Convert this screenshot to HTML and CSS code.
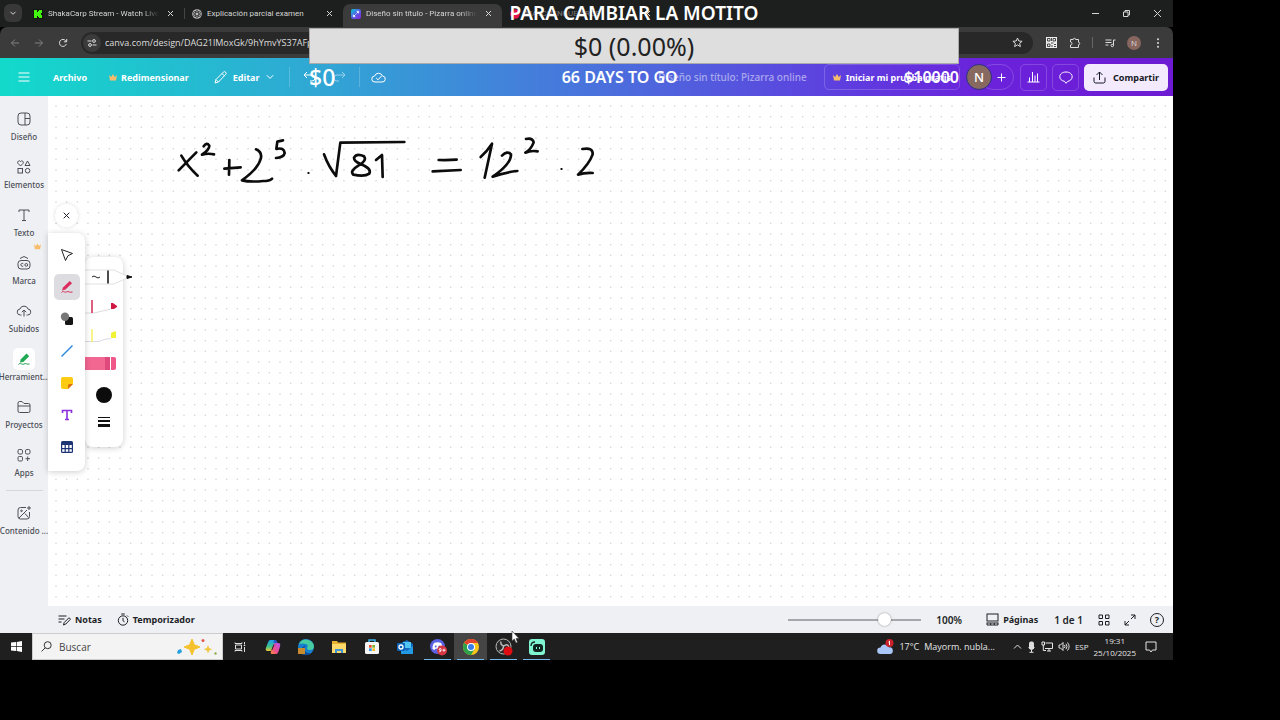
FILE: index.html
```html
<!DOCTYPE html>
<html lang="es">
<head>
<meta charset="utf-8">
<meta name="viewport" content="width=device-width, initial-scale=1.0">
<title>Diseño sin título - Pizarra online</title>
<link rel="stylesheet" href="styles.css">
</head>
<body>
<div class="desktop">

  <!-- browser tabs -->
  <div class="tabs">
    <button class="tab-search" aria-label="Buscar pestañas"><svg width="8" height="8" viewBox="0 0 8 8"><path d="M1.5 2.8 4 5.3 6.5 2.8"/></svg></button>
    <div class="tab">
      <svg class="fav" viewBox="0 0 10 10"><rect width="10" height="10" fill="#101810" stroke="none"/><path d="M1 1h3v2h1V2h1V1h3v3H8v2h1v3H6V8H5V7H4v2H1z" fill="#43f50e" stroke="none"/></svg>
      <span class="tab-title fade">ShakaCarp Stream - Watch Live</span>
      <button class="tab-close" aria-label="Cerrar"><svg width="7" height="7" viewBox="0 0 7 7"><path d="M1 1l5 5M6 1 1 6"/></svg></button>
    </div>
    <div class="tab line">
      <svg class="fav" viewBox="0 0 10 10"><circle cx="5" cy="5" r="4.8" fill="#bbb" stroke="none"/><g stroke="#333" stroke-width=".7"><ellipse cx="5" cy="5" rx="1.7" ry="3.9"/><ellipse cx="5" cy="5" rx="1.7" ry="3.9" transform="rotate(60 5 5)"/><ellipse cx="5" cy="5" rx="1.7" ry="3.9" transform="rotate(120 5 5)"/></g></svg>
      <span class="tab-title">Explicación parcial examen</span>
      <button class="tab-close" aria-label="Cerrar"><svg width="7" height="7" viewBox="0 0 7 7"><path d="M1 1l5 5M6 1 1 6"/></svg></button>
    </div>
    <div class="tab active">
      <svg class="fav" viewBox="0 0 10 10"><defs><linearGradient id="cv" x1="0" y1="0" x2="1" y2="1"><stop offset="0" stop-color="#08c8d0"/><stop offset=".5" stop-color="#5460e8"/><stop offset="1" stop-color="#8b22d8"/></linearGradient></defs><rect width="10" height="10" rx="2" fill="url(#cv)" stroke="none"/><path d="M2.5 7.5l2-2M5.5 4.5l2-2M5.7 2.4h1.9v1.9M2.4 5.7v1.9h1.9" stroke="#fff" stroke-width=".9"/></svg>
      <span class="tab-title fade">Diseño sin título - Pizarra online</span>
      <button class="tab-close" aria-label="Cerrar"><svg width="7" height="7" viewBox="0 0 7 7"><path d="M1 1l5 5M6 1 1 6"/></svg></button>
    </div>
    <div class="tab">
      <svg class="fav" viewBox="0 0 10 10"><circle cx="5" cy="5" r="4.8" fill="#e3124b" stroke="none"/></svg>
      <span class="tab-title dim">MATCHENGUE ARGS</span>
      <button class="tab-close" aria-label="Cerrar"><svg width="7" height="7" viewBox="0 0 7 7"><path d="M1 1l5 5M6 1 1 6"/></svg></button>
    </div>
    <div class="win-controls">
      <button aria-label="Minimizar"><svg width="9" height="9" viewBox="0 0 9 9"><path d="M1 4.5h7"/></svg></button>
      <button aria-label="Restaurar"><svg width="9" height="9" viewBox="0 0 9 9"><path d="M1.5 3h4.5v4.5H1.5zM3 3V1.5h4.5V6H6"/></svg></button>
      <button aria-label="Cerrar ventana"><svg width="9" height="9" viewBox="0 0 9 9"><path d="M1 1l7 7M8 1 1 8"/></svg></button>
    </div>
  </div>

  <!-- address bar -->
  <div class="toolbar">
    <button class="nav off" aria-label="Atrás"><svg width="10" height="10" viewBox="0 0 10 10"><path d="M9 5H1.5M5 1.5 1.5 5 5 8.5"/></svg></button>
    <button class="nav off" aria-label="Adelante"><svg width="10" height="10" viewBox="0 0 10 10"><path d="M1 5h7.5M5 1.5 8.5 5 5 8.5"/></svg></button>
    <button class="nav" aria-label="Recargar"><svg width="10" height="10" viewBox="0 0 10 10"><path d="M8.3 6A3.5 3.5 0 1 1 7.6 2.6L8.6 3.7M8.7 1v2.8H5.9"/></svg></button>
    <div class="omnibox">
      <span class="site"><svg width="10" height="10" viewBox="0 0 10 10"><path d="M.5 3h4M5.5 7h4"/><circle cx="7" cy="3" r="1.4"/><circle cx="3" cy="7" r="1.4"/></svg></span>
      <input class="url" aria-label="Dirección" value="canva.com/design/DAG21lMoxGk/9hYmvYS37AFp">
      <button class="star" aria-label="Favorito"><svg width="11" height="11" viewBox="0 0 11 11"><path d="M5.5 1l1.3 3 3.3.3-2.5 2.1.8 3.2-2.9-1.7-2.9 1.7.8-3.2L.9 4.3l3.300-.3z"/></svg></button>
    </div>
    <div class="ext">
      <button aria-label="Código QR"><svg width="11" height="11" viewBox="0 0 11 11"><rect width="11" height="11" fill="#eee" stroke="none"/><g stroke="#222" stroke-width=".8"><path d="M1.500 1.500h2.500v2.500H1.500zM7 1.500h2.500v2.500H7zM1.500 7h2.500v2.500H1.500z"/><path d="M5.500 1v3M5 6h2.500M8 7.500h2M6 8v2M8 9.500h2"/></g></svg></button>
      <button aria-label="Extensiones"><svg width="12" height="12" viewBox="0 0 12 12"><path d="M1.500 2.500h2.700a1.200 1.200 0 0 1 2.400 0h2.900v2.800a1.200 1.200 0 0 1 0 2.400v2.800h-8V8a1.500 1.500 0 0 0 0-3z"/></svg></button>
      <i class="bar"></i>
      <button aria-label="Lista"><svg width="11" height="10" viewBox="0 0 11 10"><path d="M.5 2h6M.5 4.500h6M.5 7h3M8.500 7.500V2h2"/><circle cx="7.300" cy="7.500" r="1.200"/></svg></button>
      <button class="profile">N</button>
      <button aria-label="Menú"><svg width="4" height="10" viewBox="0 0 4 10"><g fill="#ddd" stroke="none"><circle cx="2" cy="1.200" r="1"/><circle cx="2" cy="5" r="1"/><circle cx="2" cy="8.800" r="1"/></g></svg></button>
    </div>
  </div>

  <!-- canva header -->
  <header class="header">
    <button class="burger" aria-label="Menú principal"><svg width="12" height="10" viewBox="0 0 12 10"><path d="M.5 1h11M.5 5h11M.5 9h11"/></svg></button>
    <button class="menu file">Archivo</button>
    <button class="menu resize"><svg width="8" height="7" viewBox="0 0 8 7"><path class="crown" d="M0 1l2.200 2L4 0l1.800 3L8 1 7 6.500H1z"/></svg>Redimensionar</button>
    <button class="menu edit"><svg width="13" height="13" viewBox="0 0 13 13"><path d="M1 12l1-3.500L9.300 1.200a1.400 1.400 0 0 1 2.300 2.300L4.500 11zM8 2.500 10.300 4.800M2 8.500 4.500 11"/></svg>Editar<svg class="chev" width="8" height="6" viewBox="0 0 8 6"><path d="M.8 1.200 4 4.400 7.200 1.200"/></svg></button>
    <div class="history">
      <button aria-label="Deshacer"><svg width="13" height="12" viewBox="0 0 13 12"><path d="M4 1 1 4l3 3M1 4h8a3 3 0 0 1 0 6H7"/></svg></button>
      <button class="redo" aria-label="Rehacer"><svg width="13" height="12" viewBox="0 0 13 12"><path d="M9 1l3 3-3 3M12 4H4a3 3 0 0 0 0 6h2"/></svg></button>
    </div>
    <button class="cloud" aria-label="Guardado"><svg width="15" height="12" viewBox="0 0 15 12"><path d="M4 11a3 3 0 0 1-.4-6A4.200 4.200 0 0 1 11.500 5 3 3 0 0 1 11 11zM5.200 7l1.800 1.800L10.500 5"/></svg></button>
    <span class="doc-name">Diseño sin título: Pizarra online</span>
    <button class="pro"><svg width="8" height="7" viewBox="0 0 8 7"><path class="crown" d="M0 1l2.200 2L4 0l1.800 3L8 1 7 6.500H1z"/></svg>Iniciar mi prueba gratis</button>
    <div class="people"><span class="avatar">N</span><button class="plus" aria-label="Agregar"><svg width="9" height="9" viewBox="0 0 9 9"><path d="M4.500 0.500v8M.5 4.500h8"/></svg></button></div>
    <button class="square" aria-label="Estadísticas"><svg width="13" height="12" viewBox="0 0 13 12"><path d="M.5 11h12M2.500 11V6.500M5.500 11V1M8 11V4.500M10.500 11V2.500"/></svg></button>
    <button class="square" aria-label="Comentarios"><svg width="14" height="13" viewBox="0 0 14 13"><path d="M5.500 10.300C2.500 9.800.8 8 .8 5.700.8 3 3.400 1 7 1s6.200 2 6.200 4.700S10.800 10 8.800 10.300L7 12.300z"/></svg></button>
    <button class="share"><svg width="13" height="13" viewBox="0 0 13 13"><path d="M1 6.500v3.800A1.700 1.700 0 0 0 2.700 12h7.600a1.700 1.700 0 0 0 1.700-1.700V6.500M6.500 9V1M3.500 4l3-3 3 3"/></svg>Compartir</button>
  </header>

  <div class="editor">
    <nav class="side">
      <a href="#"><svg viewBox="0 0 16 16"><rect x="2" y="2" width="12" height="12" rx="3"/><path d="M9 2v12M9 7.500h5"/></svg>Diseño</a>
      <a href="#"><svg viewBox="0 0 16 16"><path d="M4.500 7 2 4.400a1.500 1.500 0 0 1 2.500-1.900A1.500 1.500 0 0 1 7 4.400zM11.500 2 14 6.500H9z"/><rect x="2" y="9.500" width="4.500" height="4.500"/><circle cx="11.600" cy="11.700" r="2.300"/></svg>Elementos</a>
      <a href="#"><svg viewBox="0 0 16 16"><path d="M3 5V3h10v2M8 3v10.500M6 13.500h4"/></svg>Texto</a>
      <a href="#"><svg viewBox="0 0 16 16"><rect x="2" y="5.500" width="12" height="8.500" rx="3"/><path d="M4 3.500l4-2 4 2M7.300 8.700a1.500 1.500 0 1 0 0 2.300"/><circle cx="10.300" cy="9.900" r="1.400"/></svg>Marca<svg class="badge" viewBox="0 0 8 7"><path class="crown" d="M0 1l2.200 2L4 0l1.800 3L8 1 7 6.500H1z"/></svg></a>
      <a href="#"><svg viewBox="0 0 16 16"><path d="M5.500 12H4.500a3 3 0 0 1-.5-6 4.200 4.200 0 0 1 8 0 3 3 0 0 1-.5 6h-1M8 13.500V7M5.800 9.200 8 7l2.200 2.200"/></svg>Subidos</a>
      <a href="#" class="on"><svg viewBox="0 0 16 16"><path d="M2.500 13.500c2-2.500 3.500.8 5.500-.5s3 .8 5.500 0" stroke="#1a9c4a"/><path d="M4 11.500l.6-3L10.500 2.600l2.700 2.700L7.300 11z" fill="#21a853" stroke="none"/></svg>Herramient...</a>
      <a href="#"><svg viewBox="0 0 16 16"><path d="M2 12V4a1.500 1.500 0 0 1 1.500-1.500H6L8 4.500h4.500A1.500 1.500 0 0 1 14 6v6a1.500 1.500 0 0 1-1.500 1.500h-9A1.500 1.500 0 0 1 2 12zM2 7h12"/></svg>Proyectos</a>
      <a href="#"><svg viewBox="0 0 16 16"><rect x="2" y="2.500" width="4.500" height="4.500" rx="1.300"/><rect x="9.500" y="2.500" width="4.500" height="4.500" rx="1.300"/><rect x="2" y="9.500" width="4.500" height="4.500" rx="1.300"/><path d="M11.700 9.500V14M9.500 11.700H14"/></svg>Apps</a>
      <hr>
      <a href="#"><svg viewBox="0 0 16 16"><path d="M10 2.500H4.500A2.500 2.500 0 0 0 2 5v6.500A2.500 2.500 0 0 0 4.500 14h6.500a2.500 2.500 0 0 0 2.500-2.500V7M3 13l8-8"/><circle cx="5.500" cy="5.800" r=".8"/><path d="M13 1v4M11 3h4M9 8.500l3.500 4"/></svg>Contenido ...</a>
    </nav>

    <main class="board">
      <svg class="dots" width="100%" height="100%">
        <defs><pattern id="grid" x="2" y="4" width="32" height="32" patternUnits="userSpaceOnUse">
          <g fill="#d0d0d4"><circle cx="6" cy="6" r=".8"/><circle cx="16.700" cy="6" r=".8"/><circle cx="27.300" cy="6" r=".8"/><circle cx="6" cy="16.700" r=".8"/><circle cx="16.700" cy="16.700" r=".8"/><circle cx="27.300" cy="16.700" r=".8"/><circle cx="6" cy="27.300" r=".8"/><circle cx="16.700" cy="27.300" r=".8"/><circle cx="27.300" cy="27.300" r=".8"/></g>
        </pattern></defs>
        <rect width="100%" height="100%" fill="url(#grid)"/>
      </svg>

      <!-- pen strokes -->
      <svg class="ink" viewBox="0 0 1380 210" role="img" aria-label="x² + 2⁵ · √81 = 12² · 2">
        <path d="M64 92Q84 126 113 152M109 82L56 136"/>
        <path d="M131 64Q140 50 148 62Q148 74 126 89Q145 84 162 88"/>
        <path d="M193 131L242 127M208 105L207 149"/>
        <path d="M288 73Q308 82 302 102Q294 132 246 166Q270 172 310 168Q328 168 336 161"/>
        <path d="M369 46L352 50L349 72Q372 66 374 84Q372 97 348 99"/>
        <path class="dot" d="M445 144h1"/>
        <path d="M492 88Q506 126 528 153L541 53Q620 52 733 51"/>
        <path d="M612 94Q590 84 582 98Q582 108 600 116Q636 130 628 146Q614 156 580 149Q568 138 596 121Q622 106 612 94"/>
        <path d="M648 105L666 90L668 156"/>
        <path d="M836 105Q864 106 890 104M818 139L902 135"/>
        <path d="M962 96Q980 80 996 56L974 158"/>
        <path d="M1026 92Q1042 76 1053 88Q1054 116 998 155Q1034 142 1072 138"/>
        <path d="M1098 42Q1118 38 1121 52Q1114 72 1096 83Q1112 76 1133 79"/>
        <path class="dot" d="M1204 132h1"/>
        <path d="M1267 72Q1300 66 1298 88Q1288 116 1254 149Q1272 143 1298 144"/>
      </svg>

      <button class="close-tools" aria-label="Cerrar herramientas"><svg width="7" height="7" viewBox="0 0 7 7"><path d="M.7.7l5.600 5.600M6.300.7.7 6.300"/></svg></button>

      <div class="pens">
        <button aria-label="Lápiz"><svg width="47" height="16" viewBox="0 0 47 16"><path d="M0 1h29l13 6v2L29 15H0" fill="#fff" stroke="#e2e2e2"/><path d="M7 8q2-2 4 0t4 0" stroke="#222"/><path d="M23 1.500v13" stroke="#111" stroke-width="1.500"/><path d="M42 6.500l5 1.500-5 1.500z" fill="#111" stroke="#111"/></svg></button>
        <button aria-label="Marcador"><svg width="32" height="16" viewBox="0 0 32 16"><path d="M0 15h9l17-4" stroke="#ddd"/><path d="M7 2v13" stroke="#d02a56" stroke-width="1.500"/><path d="M26 5h2l4 3v1l-3 2h-3z" fill="#d01842" stroke="none"/></svg></button>
        <button aria-label="Resaltador"><svg width="32" height="16" viewBox="0 0 32 16"><path d="M0 14.500h14l5-2 7-1" stroke="#dadae4"/><path d="M7 2v13" stroke="#f3f065" stroke-width="1.500"/><path d="M26 6l4-2 1 1v6h-5z" fill="#f2f234" stroke="none"/></svg></button>
        <button aria-label="Borrador"><svg width="32" height="16" viewBox="0 0 32 16"><g stroke="none"><path d="M0 1h20v13H0z" fill="#f26692"/><path d="M20 1h5v13h-5z" fill="#df4a7c"/><path d="M26 1h3a2 2 0 0 1 2 2v9a2 2 0 0 1-2 2h-3z" fill="#ef5888"/></g></svg></button>
        <button class="color" aria-label="Color"></button>
        <button class="weight" aria-label="Grosor"><svg width="12" height="12" viewBox="0 0 12 12"><g fill="#111" stroke="none"><path d="M0 1h12v1H0zM0 4h12v2H0zM0 8h12v3H0z"/></g></svg></button>
      </div>

      <div class="tools">
        <button aria-label="Seleccionar"><svg viewBox="0 0 14 14"><path d="M1.500 1.500 12.500 5.500 8 7.700 5.500 12.500z" stroke="#222"/></svg></button>
        <button class="on" aria-label="Dibujar"><svg viewBox="0 0 14 14"><path d="M2 10.500 3 7.500 9.700 1 12 3.300 5.500 9.500z" fill="#dc2b5d" stroke="none"/><path d="M1.500 12.500c2-2.500 3 .7 5-.6s3.500 1.300 6 0" stroke="#dc2b5d"/></svg></button>
        <button aria-label="Formas"><svg viewBox="0 0 14 14"><rect x="5" y="5" width="8" height="8" rx="1.500" fill="#151515" stroke="none"/><circle cx="5" cy="4.800" r="4.200" fill="#777" stroke="none"/></svg></button>
        <button aria-label="Línea"><svg viewBox="0 0 14 14"><path d="M1.500 12.500l11-11" stroke="#2c8ae0" stroke-width="1.500"/></svg></button>
        <button aria-label="Nota"><svg viewBox="0 0 14 14"><path d="M3 1h8a2 2 0 0 1 2 2v5l-5 5H3a2 2 0 0 1-2-2V3a2 2 0 0 1 2-2z" fill="#fccb12" stroke="none"/><path d="M13 8l-5 5V9.500A1.500 1.500 0 0 1 9.500 8z" fill="#dc6b10" stroke="none"/></svg></button>
        <button aria-label="Texto"><svg viewBox="0 0 14 14"><path d="M2.500 5V2.500h9V5M7 2.500v9M5 11.500h4" stroke="#8b30dc" stroke-width="1.600"/></svg></button>
        <button aria-label="Tabla"><svg viewBox="0 0 14 14"><rect x="1" y="1" width="12" height="12" rx="1.500" fill="#1d3475" stroke="none"/><g fill="#fff" stroke="none"><path d="M2.200 5h2.400v3H2.200zM5.800 5h2.400v3H5.800zM9.400 5h2.400v3H9.400zM2.200 9.200h2.400v2.600H2.200zM5.800 9.200h2.400v2.600H5.800zM9.400 9.200h2.400v2.600H9.400z"/></g></svg></button>
      </div>
    </main>

    <footer class="status">
      <button class="notes"><svg width="13" height="12" viewBox="0 0 13 12"><path d="M.5 2h8M.5 5h6M.5 8h3M5.500 11l.7-2.500L11 3.700l1.500 1.500L7.800 10z"/></svg>Notas</button>
      <button class="timer"><svg width="12" height="13" viewBox="0 0 12 13"><circle cx="6" cy="7.500" r="4.700"/><path d="M4.200 1h3.600M6 4.800v3l1.500 1M10 2.500l1.200 1.200"/></svg>Temporizador</button>
      <input class="zoom" type="range" min="0" max="100" value="75" aria-label="Zoom">
      <button class="percent">100%</button>
      <button class="pages"><svg width="13" height="13" viewBox="0 0 13 13"><rect x="1" y="1" width="11" height="7"/><path d="M1 9.500V12h11V9.500M1 10h11M4.700 10v2M8.300 10v2"/></svg>Páginas</button>
      <span class="count">1 de 1</span>
      <button aria-label="Cuadrícula"><svg width="12" height="12" viewBox="0 0 12 12"><path d="M1 1h3.500v3.500H1zM7.500 1H11v3.500H7.500zM1 7.500h3.500V11H1zM7.500 7.500H11V11H7.500z"/></svg></button>
      <button aria-label="Pantalla completa"><svg width="12" height="12" viewBox="0 0 12 12"><path d="M7 1h4v4M11 1 7 5M5 11H1V7M1 11l4-4"/></svg></button>
      <button aria-label="Ayuda"><span class="help">?</span></button>
    </footer>
  </div>

  <!-- windows taskbar -->
  <div class="taskbar">
    <button class="start" aria-label="Inicio"><svg width="11" height="11" viewBox="0 0 11 11"><path d="M0 1.500 5 1v4.200H0zM5.700.9 11 0v5.200H5.700zM0 5.900h5V10l-5-.5zM5.700 5.900H11V11l-5.300-.9z" fill="#fff" stroke="none"/></svg></button>
    <label class="search">
      <svg width="11" height="11" viewBox="0 0 11 11"><circle cx="6.700" cy="4.200" r="3.500"/><path d="M4.200 6.800.6 10.400"/></svg>
      <input type="text" placeholder="Buscar" aria-label="Buscar">
      <svg width="42" height="18" viewBox="0 0 42 18"><g stroke="none"><path d="M17 1l2.300 5.700L25 9l-5.700 2.300L17 17l-2.300-5.700L9 9l5.700-2.300z" fill="#f5c22d" stroke="#f5c22d" stroke-linejoin="round"/><path d="M33 7l1.200 3 3 1.200-3 1.200-1.200 3-1.200-3-3-1.200 3-1.200z" fill="#f3c63f"/><path d="M3 12l3-1 1 3-3 2-2-1z" fill="#24a1de"/><circle cx="28" cy="2.500" r="1.500" fill="#e2574f"/><circle cx="40.500" cy="15.500" r="1.200" fill="#8cb04e"/></g></svg>
    </label>
    <div class="apps">
      <button aria-label="Vista de tareas"><svg viewBox="0 0 18 18"><path d="M4 4.500v1h7v-1M4 13.500v-1h7v1M4.500 7h6v4h-6zM13.500 4v2.500M13.500 9v5M12.700 7.500h1.600" stroke="#ddd"/></svg></button>
      <button aria-label="Copilot"><svg viewBox="0 0 18 18"><defs><linearGradient id="cp" x1="0" y1="0" x2="0" y2="1"><stop offset="0" stop-color="#1c9ff0"/><stop offset=".6" stop-color="#3fc38b"/><stop offset="1" stop-color="#f0c82e"/></linearGradient><linearGradient id="cq" x1="1" y1="0" x2="0" y2="1"><stop offset="0" stop-color="#b84df0"/><stop offset=".6" stop-color="#ee4f8d"/><stop offset="1" stop-color="#fb9136"/></linearGradient></defs><path d="M6 2h4.500q2 0 1 2.500L9 11q-1 2-3 2H3.500Q1 13 2 9.500l2-5Q4.700 2 6 2z" fill="url(#cp)" stroke="none"/><path d="M10 2h1.500q1.500 0 2 3H9.500z" fill="#2456c8" stroke="none"/><path d="M12 5h2.500q2.500 0 1.500 3.500l-1.500 5q-.8 2.500-2.500 2.500H8q-2 0-1-2.500L9.300 7q.7-2 2.700-2z" fill="url(#cq)" stroke="none"/><path d="M10 6.500 7.800 12" stroke="#1f1f1f"/></svg></button>
      <button aria-label="Edge"><svg viewBox="0 0 18 18"><g stroke="none"><circle cx="9" cy="9" r="8" fill="#1680d0"/><path d="M2 6a8 8 0 0 1 15 2q0 4-4 4-3 0-3-2 2-3-1-4-4-1-7 0z" fill="#47cba1"/><path d="M9 7q-3 3-1 6 2 3 6 2-4 4-9 1Q2 10 9 7z" fill="#114b93"/><path d="M1 10h7v6H1z" fill="#c78b2d"/></g></svg></button>
      <button aria-label="Explorador"><svg viewBox="0 0 18 18"><g stroke="none"><path d="M2 3h5l1 1.500h8V15H2z" fill="#e6b232"/><path d="M2 6h14v9H2z" fill="#fbd96b"/><path d="M5 15v-4h8v4h-2v-2H7v2z" fill="#4295d5"/></g></svg></button>
      <button aria-label="Microsoft Store"><svg viewBox="0 0 18 18"><path d="M6 5V2h6v3" stroke="#3cb5ec" stroke-width="1.500"/><g stroke="none"><rect x="2" y="4" width="14" height="12" rx="1.500" fill="#f5f5f5"/><path d="M6 7h2.700v2.700H6z" fill="#ef4d2b"/><path d="M9.300 7H12v2.700H9.300z" fill="#7bb62c"/><path d="M6 10.300h2.700V13H6z" fill="#2a9ae3"/><path d="M9.300 10.300H12V13H9.300z" fill="#f7b820"/></g></svg></button>
      <button aria-label="Outlook"><svg viewBox="0 0 18 18"><g stroke="none"><path d="M5 5l6-3 6 4v9H5z" fill="#1467bb"/><path d="M7 4h8v6H7z" fill="#50c5f2"/><path d="M5 9l6 4 6-5v8H5z" fill="#239be4"/><rect x="1" y="5" width="8" height="8" rx="1" fill="#0b62b8"/></g><circle cx="5" cy="9" r="2" stroke="#fff" stroke-width="1.300"/></svg></button>
      <button class="open" aria-label="Discord"><svg viewBox="0 0 18 18"><g stroke="none"><circle cx="8.500" cy="8.500" r="7.500" fill="#5b62e3"/><path d="M5 5q3.500-1.500 7 0 2 3 1.500 6l-2 1-1-1.200H6.500l-1 1.200-2-1Q3 8 5 5z" fill="#fff"/><circle cx="6.700" cy="8.500" r="1" fill="#5b62e3"/><circle cx="10.300" cy="8.500" r="1" fill="#5b62e3"/><circle cx="13" cy="12.500" r="5" fill="#d53745"/></g><path d="M10.200 13.800q2 .4 2-2.600a1 1 0 1 0-.3 1M13.500 12.200h3M15 10.700v3" stroke="#fff" stroke-width=".9"/></svg></button>
      <button class="open current" aria-label="Chrome"><svg viewBox="0 0 18 18"><g stroke="none"><circle cx="9" cy="9" r="8" fill="#f8c51b"/><path d="M9 9 2.100 5A8 8 0 0 1 16 5H9z" fill="#e4412f"/><path d="M2.100 5A8 8 0 0 0 9 17l3.500-6L9 9z" fill="#2da14c"/><circle cx="9" cy="9" r="4" fill="#fff"/><circle cx="9" cy="9" r="3" fill="#3b7de8"/></g></svg></button>
      <button class="open" aria-label="OBS"><svg viewBox="0 0 18 18"><circle cx="8.500" cy="8.500" r="7.500" fill="#292929" stroke="#bbb"/><path d="M9 8Q5 7 6 3.500M9 8q3-3 5 1M8.500 8q0 4-4 5" stroke="#bbb" stroke-width="1.500"/><circle cx="13" cy="13" r="4.500" fill="#df0d12" stroke="none"/></svg></button>
      <button class="open" aria-label="Streamlabs"><svg viewBox="0 0 18 18"><rect x="1" y="1" width="16" height="16" rx="3" fill="#80f5d2" stroke="none"/><rect x="5" y="6" width="10" height="8" rx="3" fill="#10251f" stroke="none"/><path d="M3 8q0-4 4-4" stroke="#10251f" stroke-width="1.300"/><path d="M8.500 9v2M11.500 9v2" stroke="#80f5d2"/></svg></button>
    </div>
    <div class="tray">
      <button class="weather"><svg width="17" height="16" viewBox="0 0 17 16"><path d="M3.500 15a3.300 3.300 0 0 1 0-6.600 4.500 4.500 0 0 1 8.500 0 3.300 3.300 0 0 1 1 6.600z" fill="#aac6f7" stroke="none"/><circle cx="12.500" cy="4" r="4" fill="#c9222b" stroke="none"/><path d="M11.500 3l1-.8V6" stroke="#fff"/></svg><span>17°C</span><span>Mayorm. nubla...</span></button>
      <button aria-label="Iconos ocultos"><svg width="9" height="8" viewBox="0 0 9 8"><path d="M1 5.500 4.500 2 8 5.500"/></svg></button>
      <button aria-label="Micrófono"><svg width="9" height="12" viewBox="0 0 9 12"><rect x="2" y="0.500" width="5" height="8" rx="2" fill="#ddd" stroke="none"/><path d="M1.500 6.500q3 3.500 6 0M4.500 8.500v2.500M2.500 11.300h4"/></svg></button>
      <button aria-label="Red"><svg width="12" height="11" viewBox="0 0 12 11"><path d="M4.500 2h7v5.500H4M6 10h4M8 7.500V10M1 1h2.500v3H1zM2.300 4v5.500H5"/></svg></button>
      <button aria-label="Volumen"><svg width="12" height="11" viewBox="0 0 12 11"><path d="M1 4h1.500L5 1.500v8L2.500 7H1zM6.500 4q1 1.500 0 3M8 2.800q2 2.700 0 5.400M9.500 1.500q3.200 4 0 8"/></svg></button>
      <button class="lang">ESP</button>
      <button class="clock"><span>19:31</span><span>25/10/2025</span></button>
      <button class="notif" aria-label="Notificaciones"><svg width="12" height="12" viewBox="0 0 12 12"><path d="M1 1h10v8H7.500L6 11 4.500 9H1z"/></svg></button>
    </div>
  </div>

  <!-- stream goal -->
  <div class="goal">
    <div class="goal-title">PARA CAMBIAR LA MOTITO</div>
    <div class="goal-bar">$0 (0.00%)</div>
    <div class="goal-info"><span class="from">$0</span><span>66 DAYS TO GO</span><span>$10000</span></div>
  </div>

  <svg class="cursor" width="9" height="14" viewBox="0 0 9 14"><path d="M1 1v10l2.300-2 1.700 4 1.500-.7L5 8.500h3z" fill="#fff" stroke="#333" stroke-width=".6"/></svg>
</div>
</body>
</html>
```

FILE: styles.css
```css
* {
  box-sizing: border-box;
}

body {
  margin: 0;
  height: 100vh;
  padding: 0 107px 60px 0;
  background: #000;
  font-family: "Open Sans", "Noto Sans", sans-serif;
  font-size: 9px;
}

button {
  display: flex;
  align-items: center;
  justify-content: center;
  border: 0;
  padding: 0;
  background: none;
  color: inherit;
  font: inherit;
  white-space: nowrap;
}

input {
  font: inherit;
}

svg {
  flex: none;
  fill: none;
  stroke: currentColor;
}

.crown {
  fill: #f7bd6c;
  stroke: none;
}

.desktop {
  position: relative;
  display: flex;
  flex-direction: column;
  height: 100%;
}

/* browser tabs */
.tabs {
  display: flex;
  height: 27px;
  flex: none;
  padding-left: 4px;
  background: #1d1f1e;
  color: #d5d5d5;
  font-family: Roboto, sans-serif;
  font-size: 8px;
}

.tab-search {
  width: 18px;
  height: 18px;
  margin: 4px 3px 0 0;
  border-radius: 6px;
  background: #383838;
}

.tab {
  display: flex;
  align-items: center;
  width: 159px;
  padding: 0 8px;
}

.tab.line {
  background: linear-gradient(#444, #444) 0 50% / 1px 11px no-repeat;
}

.tab.active {
  margin-top: 4px;
  padding-bottom: 4px;
  border-radius: 7px 7px 0 0;
  background: #3b3b3b;
}

.fav {
  width: 10px;
  height: 10px;
  margin-right: 5px;
}

.tab-title {
  flex: 1;
  overflow: hidden;
  white-space: nowrap;
}

.fade {
  -webkit-mask-image: linear-gradient(90deg, #000 85%, transparent);
  mask-image: linear-gradient(90deg, #000 85%, transparent);
}

.dim {
  color: #777;
}

.tab-close {
  width: 11px;
  margin-left: 6px;
}

.win-controls {
  display: flex;
  margin-left: auto;
}

.win-controls button {
  width: 31px;
}

/* address bar */
.toolbar {
  display: flex;
  align-items: center;
  height: 31px;
  flex: none;
  padding: 0 3px;
  border-radius: 7px 7px 0 0;
  background: #3b3b3b;
  color: #ddd;
}

.nav {
  width: 24px;
  height: 24px;
}

.off {
  color: #818181;
}

.omnibox {
  display: flex;
  align-items: center;
  flex: 1;
  height: 22px;
  margin: 0 6px;
  padding: 0 10px 0 2px;
  border-radius: 11px;
  background: #282828;
}

.site {
  display: flex;
  align-items: center;
  justify-content: center;
  width: 18px;
  height: 18px;
  border-radius: 9px;
  background: #3b3b3b;
}

.url {
  flex: 1;
  padding: 0 4px;
  border: 0;
  background: none;
  color: #ddd;
}

.ext {
  display: flex;
  align-items: center;
}

.ext button {
  width: 24px;
}

.bar {
  width: 1px;
  height: 11px;
  margin: 0 5px;
  background: #666;
}

.ext .profile {
  width: 14px;
  height: 14px;
  margin: 0 5px;
  border-radius: 7px;
  background: #87665f;
  font-size: 8px;
}

/* canva header */
.header {
  display: flex;
  align-items: center;
  height: 38px;
  flex: none;
  padding: 0 5px 0 18px;
  background: linear-gradient(90deg, #12dacb, #2fa9d4 26%, #4778dc 48%, #6039df 74%, #6b22db 84%, #6c1bd2);
  color: #fff;
  font-family: "Noto Sans", sans-serif;
  font-weight: 700;
}

.menu {
  gap: 4px;
}

.file {
  margin-left: 23px;
}

.resize {
  margin-left: 22px;
}

.edit {
  gap: 6px;
  margin-left: 25px;
}

.history {
  display: flex;
  gap: 17px;
  height: 20px;
  margin-left: 15px;
  padding: 0 13px;
  border: solid #ffffff33;
  border-width: 0 1px;
}

.redo {
  opacity: .5;
}

.cloud {
  margin-left: 11px;
}

.doc-name {
  margin-left: auto;
  color: #ffffff80;
  font-size: 10px;
  font-weight: 500;
}

.pro {
  gap: 5px;
  height: 26px;
  margin-left: 17px;
  padding: 0 8px;
  border: 1px solid #ffffff2e;
  border-radius: 5px;
}

.people {
  display: flex;
  align-items: center;
  margin: 0 6px;
}

.avatar {
  z-index: 1;
  width: 26px;
  height: 26px;
  margin-right: -12px;
  border: 1px solid #2b3182;
  border-radius: 13px;
  background: #87695f;
  font-size: 13px;
  font-weight: 500;
  line-height: 24px;
  text-align: center;
}

.plus {
  width: 34px;
  height: 26px;
  padding-left: 9px;
  border: 1px solid #ffffff2e;
  border-radius: 13px;
}

.square {
  width: 27px;
  height: 27px;
  margin-right: 5px;
  border: 1px solid #ffffff2e;
  border-radius: 5px;
}

.share {
  gap: 7px;
  width: 84px;
  height: 27px;
  border-radius: 5px;
  background: #f3eafd;
  color: #151823;
}

/* editor */
.editor {
  display: grid;
  grid-template: 1fr 27px / 48px 1fr;
  flex: 1;
  min-height: 0;
  background: #eff0f4;
  color: #1c1f26;
}

.side {
  grid-row: 1 / 3;
  padding-top: 9px;
  font-family: "Noto Sans", sans-serif;
  font-size: 8px;
  font-weight: 500;
  line-height: 12px;
}

.side a {
  position: relative;
  display: flex;
  flex-direction: column;
  align-items: center;
  gap: 4px;
  height: 48px;
  padding-top: 6px;
  color: #4b4e56;
  text-decoration: none;
  white-space: nowrap;
}

.side svg {
  width: 16px;
  height: 16px;
}

.side .badge {
  position: absolute;
  top: -6px;
  right: 7px;
  width: 7px;
  height: 7px;
}

.side .on svg {
  padding: 3px;
  width: 22px;
  height: 22px;
  margin: -3px;
  border-radius: 5px;
  background: #fff;
}

.side hr {
  width: 37px;
  margin: 1px auto 8px;
  border: 0;
  border-top: 1px solid #d5d7dc;
}

.board {
  position: relative;
  background: #fff;
}

.dots {
  display: block;
  stroke: none;
}

.ink {
  position: absolute;
  top: 29px;
  left: 112px;
  width: 460px;
  height: 70px;
  stroke: #0c0c0c;
  stroke-width: 8;
  stroke-linecap: round;
  stroke-linejoin: round;
}

.dot {
  stroke-width: 6;
}

.close-tools {
  position: absolute;
  top: 108px;
  left: 7px;
  width: 23px;
  height: 23px;
  border-radius: 12px;
  background: #fff;
  box-shadow: 0 0 4px #0002;
}

.tools,
.pens {
  position: absolute;
  left: 0;
  display: flex;
  flex-direction: column;
  align-items: center;
  background: #fff;
  box-shadow: 0 1px 6px #0003;
}

.tools {
  top: 137px;
  gap: 6px;
  width: 37px;
  padding: 9px 0 11px;
  border-radius: 0 8px 8px 0;
}

.tools button {
  width: 26px;
  height: 26px;
  border-radius: 5px;
}

.tools .on {
  background: #dddde1;
}

.tools svg {
  width: 14px;
  height: 14px;
}

.pens {
  top: 161px;
  left: 37px;
  gap: 13px;
  align-items: flex-start;
  width: 38px;
  height: 190px;
  padding-top: 12px;
  border-radius: 8px;
}

.pens .color {
  width: 16px;
  height: 16px;
  margin: 2px auto 0;
  border-radius: 8px;
  background: #0c0c0c;
}

.pens .weight {
  margin: 0 auto;
}

/* bottom bar of the editor */
.status {
  display: flex;
  align-items: center;
  padding: 0 9px 0 10px;
  font-family: "Noto Sans", sans-serif;
  font-weight: 700;
}

.status button {
  gap: 4px;
}

.status .timer {
  margin-left: 15px;
}

.zoom {
  width: 133px;
  height: 14px;
  margin: 0 15px 0 auto;
  appearance: none;
  background: linear-gradient(#a5a7ad, #a5a7ad) 0 50% / 100% 2px no-repeat;
}

.zoom::-webkit-slider-thumb {
  width: 13px;
  height: 13px;
  appearance: none;
  border-radius: 7px;
  background: #fff;
  box-shadow: 0 0 2px #0007;
}

.status .percent {
  margin-right: 24px;
}

.percent,
.count {
  font-size: 10px;
  font-weight: 600;
}

.count {
  margin: 0 15px 0 16px;
}

.status .count ~ button + button {
  margin-left: 14px;
}

.help {
  width: 14px;
  height: 14px;
  border: 1px solid #1c1f26;
  border-radius: 7px;
  line-height: 12px;
}

/* windows taskbar */
.taskbar {
  display: flex;
  height: 27px;
  flex: none;
  background: #1f1f1f;
  color: #e5e5e5;
}

.start {
  width: 32px;
}

.search {
  display: flex;
  align-items: center;
  width: 191px;
  padding: 0 5px 0 8px;
  border: 1px solid #ccc;
  background: #f3f3f3;
  color: #333;
}

.search input {
  flex: 1;
  min-width: 0;
  padding: 0 7px;
  border: 0;
  background: none;
  font-size: 10px;
}

.search input::placeholder {
  color: #444;
}

.apps {
  display: flex;
}

.apps button {
  width: 33px;
}

.apps svg {
  width: 18px;
  height: 18px;
}

.apps .open {
  background: linear-gradient(#76b9ed, #76b9ed) 50% 100% / 27px 1px no-repeat;
}

.apps .current {
  background-color: #454545;
}

.tray {
  display: flex;
  align-items: center;
  gap: 5px;
  margin-left: auto;
  padding-right: 16px;
}

.weather {
  gap: 5px;
  margin-right: 13px;
}

.lang,
.clock {
  font-size: 8px;
}

.clock {
  flex-direction: column;
  line-height: 12px;
}

.notif {
  margin-left: 4px;
}

/* stream goal over the browser */
.goal {
  position: absolute;
  top: 0;
  left: 309px;
  right: 214px;
  color: #fff;
  font-family: "Noto Sans", sans-serif;
  text-align: center;
}

.goal-title {
  height: 28px;
  font-size: 19px;
  font-weight: 600;
  line-height: 26px;
}

.goal-bar {
  height: 36px;
  border: 1px solid #aaa;
  background: #dedede;
  color: #222;
  font-size: 25px;
  line-height: 34px;
}

.goal-info {
  display: flex;
  align-items: center;
  justify-content: space-between;
  height: 26px;
  font-size: 16px;
  font-weight: 600;
}

.from {
  font-size: 23px;
  font-weight: 500;
}

.cursor {
  position: absolute;
  top: 630px;
  left: 511px;
}
```
